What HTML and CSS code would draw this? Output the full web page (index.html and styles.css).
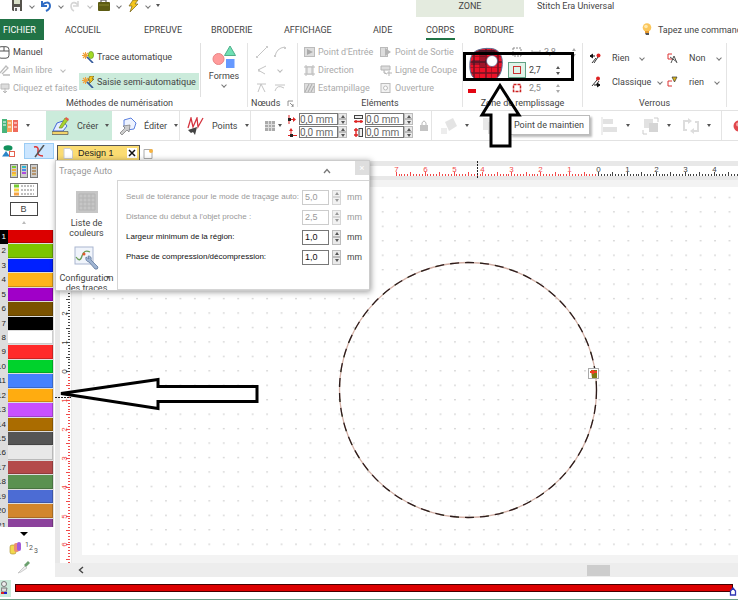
FILE: index.html
```html
<!DOCTYPE html>
<html lang="fr">
<head>
<meta charset="utf-8">
<title>Stitch Era Universal</title>
<link rel="stylesheet" href="styles.css">
</head>
<body>
<header class="titlebar">
  <div class="quick">
    <button class="ib" aria-label="Enregistrer"><svg width="12" height="12" viewBox="0 0 12 12"><path d="M1 0h10v11H2L1 10z" fill="#55534c"/><path d="M3 0h6v4H3z" fill="#d9e0c8"/><path d="M3 7h6v4H3z" fill="#f4f4f4"/><path d="M4 8h2v3H4z" fill="#666"/></svg></button>
    <i class="chev"></i>
    <button class="ib" aria-label="Annuler"><svg width="12" height="12" viewBox="0 0 12 12"><path d="M2 1v5h5M2 6C4 2 10 1 10 6c0 2-2 4-4 5" fill="none" stroke="#2f6cc4" stroke-width="2"/></svg></button>
    <i class="chev"></i>
    <button class="ib" aria-label="Rétablir"><svg width="12" height="12" viewBox="0 0 12 12"><path d="M9 1v5H4M9 6C8 2 2 1 2 6c0 2 1 4 3 5" fill="none" stroke="#d6d6d6" stroke-width="1.6"/></svg></button>
    <i class="chev pale"></i>
    <button class="ib" aria-label="Matériel"><svg width="12" height="12" viewBox="0 0 12 12"><path d="M3 3V0h5v3" fill="none" stroke="#777" stroke-width="1.4"/><rect x="0" y="2" width="12" height="9" rx="1" fill="#5d5c13"/><path d="M1 5h10" stroke="#87862c"/></svg></button>
    <i class="chev"></i>
    <button class="ib" aria-label="Exécuter"><svg width="12" height="12" viewBox="0 0 12 12"><path d="M6 0h5L8 4h3L3 12l2-6H2z" fill="#f4c51d" stroke="#77651d" stroke-width=".7"/></svg></button>
    <i class="chev"></i><i class="tri"></i>
  </div>
  <div class="context">ZONE</div>
  <div class="apptitle">Stitch Era Universal</div>
</header>

<nav class="tabs">
  <button class="tab file">FICHIER</button>
  <button class="tab t-acc">ACCUEIL</button>
  <button class="tab t-epr">EPREUVE</button>
  <button class="tab t-bro">BRODERIE</button>
  <button class="tab t-aff">AFFICHAGE</button>
  <button class="tab t-aid">AIDE</button>
  <button class="tab t-cor"><span>CORPS</span></button>
  <button class="tab t-bor">BORDURE</button>
  <button class="tell"><svg width="10" height="13" viewBox="0 0 10 13"><circle cx="5" cy="4.500" r="4.300" fill="#fbc65b"/><circle cx="4" cy="3.500" r="1.800" fill="#ffe9ae"/><path d="M3 8h4v2H3z" fill="#e79a2e"/><path d="M3 10h4v2H4z" fill="#555"/></svg>Tapez une commande</button>
</nav>

<section class="ribbon">
  <div class="group g-met">
    <div class="body">
      <div class="col three c-man">
        <button class="cmd"><svg width="10" height="13" viewBox="0 0 10 13"><rect x="-2" y=".7" width="11" height="11.500" rx="3" fill="#fff" stroke="#555"/><path d="M-2 5h11M4 1v4" stroke="#555"/></svg>Manuel</button>
        <button class="cmd off"><svg width="10" height="12" viewBox="0 0 10 12"><path d="M0 9l6-7 2 2-6 6M3 11h7" fill="none" stroke="#bbb" stroke-width="1.300"/></svg>Main libre<i class="chev pale"></i></button>
        <button class="cmd off"><svg width="10" height="12" viewBox="0 0 10 12"><path d="M1 2h8v5H1zM5 6v5M3 9l2 2 2-2" fill="#ddd" stroke="#bbb"/></svg>Cliquez et faites</button>
      </div>
      <div class="col two c-tra">
        <button class="cmd"><svg width="12" height="12" viewBox="0 0 12 12"><path d="M3.500 1v7M0 4.500h7M1 2l5 5M6 2L1 7" stroke="#f0a23c" stroke-width="1.100"/><ellipse cx="9" cy="4" rx="2.600" ry="3.600" fill="#a3da25" stroke="#5d8a18" stroke-width=".6"/><path d="M5 6l6 6" stroke="#345a9b" stroke-width="1.700"/></svg>Trace automatique</button>
        <button class="cmd on"><svg width="12" height="12" viewBox="0 0 12 12"><path d="M3.500 1v7M0 4.500h7M1 2l5 5M6 2L1 7" stroke="#f0a23c" stroke-width="1.100"/><path d="M8 0h4l-2 3h2L7 8l1-4H6z" fill="#f6c51f" stroke="#6b5a14" stroke-width=".7"/><path d="M5 6l6 6" stroke="#345a9b" stroke-width="1.700"/></svg>Saisie semi-automatique</button>
      </div>
      <button class="big"><svg width="24" height="24" viewBox="0 0 24 24"><circle cx="6.500" cy="14" r="5.500" fill="#ff9b9b" stroke="#e98585"/><path d="M18 1l5.500 9.500h-11z" fill="#6fe0b4" stroke="#4fae8a"/><rect x="14" y="14" width="8.500" height="9" fill="#6699ff"/></svg>Formes<i class="chev"></i></button>
    </div>
    <div class="glabel">Méthodes de numérisation</div>
  </div>

  <div class="group g-noe">
    <div class="body">
      <div class="nodes">
        <button class="ib" aria-label="Ligne"><svg width="12" height="12"><path d="M1 11L11 1" stroke="#c4c4c4"/><path d="M0 10h2v2H0zM10 0h2v2h-2z" fill="#ccc"/></svg></button>
        <button class="ib" aria-label="Courbe"><svg width="12" height="12"><path d="M1 11Q2 2 11 1" fill="none" stroke="#c4c4c4"/><path d="M0 9h2v2H0zM10 1h2v2h-2z" fill="#ccc"/></svg></button>
        <button class="ib" aria-label="Angle"><svg width="12" height="12"><path d="M10 2L2 6l7 4M3 5v3" fill="none" stroke="#c4c4c4"/></svg></button>
        <i class="chev pale"></i>
        <button class="ib" aria-label="Pointe"><svg width="12" height="12"><path d="M1 2h9M5 2L2 10M5 2l4 8" fill="none" stroke="#c4c4c4"/></svg></button>
        <button class="ib" aria-label="Lisse"><svg width="12" height="12"><path d="M1 9Q3 2 10 6M1 3h10" fill="none" stroke="#c4c4c4"/></svg></button>
      </div>
    </div>
    <div class="glabel">Nœuds<svg width="7" height="7"><path d="M1 6V1h5M3 3l3 3M6 4v3H4" fill="none" stroke="#777" stroke-width=".8"/></svg></div>
  </div>

  <div class="group g-ele">
    <div class="body">
      <div class="col three">
        <button class="cmd off"><svg width="11" height="10"><rect x=".5" y=".5" width="10" height="9" fill="#ddd" stroke="#bbb"/><path d="M3 2l6 3-6 3z" fill="#aaa"/></svg>Point d'Entrée</button>
        <button class="cmd off"><svg width="11" height="11"><path d="M2 0v11M9 0v11M0 2h11M0 9h11" stroke="#bbb"/><rect x="3" y="2" width="5" height="7" fill="#eee" stroke="#bbb"/></svg>Direction</button>
        <button class="cmd off"><svg width="11" height="10"><rect x=".5" y=".5" width="10" height="9" fill="#ddd" stroke="#c4c4c4"/><path d="M1 9l4-8M4 9l4-8M7 9l3-6" stroke="#aaa"/></svg>Estampillage</button>
      </div>
      <div class="col three c-sor">
        <button class="cmd off"><svg width="12" height="10"><rect x=".5" y=".5" width="7" height="9" fill="#ddd" stroke="#bbb"/><path d="M5 1l6 4-6 4z" fill="#b5b5b5"/></svg>Point de Sortie</button>
        <button class="cmd off"><svg width="12" height="11"><path d="M1 1h9v4H1zM4 5v3l3 1" fill="#ddd" stroke="#b5b5b5"/><path d="M9 6v5M7 8h5" stroke="#b5b5b5"/></svg>Ligne de Coupe</button>
        <button class="cmd off"><svg width="12" height="10"><rect x="1" y=".5" width="9" height="9" fill="#f2f2f2" stroke="#bbb"/><circle cx="5.500" cy="5" r="2" fill="#fff" stroke="#bbb"/></svg>Ouverture</button>
      </div>
    </div>
    <div class="glabel">Eléments</div>
  </div>

  <div class="group g-zon">
    <div class="body">
      <button class="fill" aria-label="Motif de remplissage"><svg width="36" height="48" viewBox="0 0 36 48"><defs><pattern id="plaid" x="2" y="1" width="12" height="11" patternUnits="userSpaceOnUse"><rect width="12" height="11" fill="#ec1228"/><path d="M0 3h12M4 0v11" stroke="#2a1420" stroke-width="1.500" opacity=".65"/><path d="M0 8.500h12M9.500 0v11" stroke="#8a0b1b" stroke-width=".6"/></pattern></defs><path d="M10 3c5-2 12-2 16-1 8 3 9 11 8 18-1 8-5 13-10 12-6-2-10 1-13 1C4 33 1 25 2 15 3 8 5 5 10 3z" fill="url(#plaid)" stroke="#5a6f94"/><path d="M12 3h14l2 3H9z" fill="#10192a" opacity=".5"/><path d="M12 5h5v16h-5zM4 13h14v5H3z" fill="#10192a" opacity=".35"/><circle cx="24" cy="14" r="5.500" fill="#fff" stroke="#34517e" stroke-width=".6"/><path d="M0 42h8v4H0z" fill="#e30613"/></svg></button>
      <div class="params">
        <div class="param wide dim"><svg width="10" height="10"><rect x="1" y="1" width="8" height="8" fill="none" stroke="#888" stroke-dasharray="2 1"/></svg><svg class="gauge" width="10" height="6"><path d="M1 3h8M1 1v4M9 1v4" stroke="#aaa"/></svg><label for="p1" class="vh">Densité</label><input id="p1" class="pin" value="3,8"><span class="spin"><button aria-label="Plus"></button><button aria-label="Moins"></button></span></div>
        <div class="param"><button class="hold" aria-label="Point de maintien"><svg width="10" height="10"><rect x="1.500" y="1.500" width="7" height="7" fill="none" stroke="#c33"/></svg></button><label for="p2" class="vh">Point de maintien</label><input id="p2" class="pin" value="2,7"><span class="spin"><button aria-label="Plus"></button><button aria-label="Moins"></button></span></div>
        <div class="param dim"><svg width="10" height="10"><rect x="1.500" y="1.500" width="7" height="7" fill="none" stroke="#c22" stroke-width="1.500" stroke-dasharray="3 1"/></svg><label for="p3" class="vh">Longueur</label><input id="p3" class="pin" value="2,5"><span class="spin"><button aria-label="Plus"></button><button aria-label="Moins"></button></span></div>
      </div>
    </div>
    <div class="glabel">Zone de remplissage</div>
  </div>

  <div class="group g-ver">
    <div class="body locks">
      <button class="cmd"><svg width="11" height="12"><path d="M0 4h5M3 2L0 4l3 2" stroke="#111" fill="#111"/><circle cx="8.500" cy="3.500" r="2" fill="#d22"/><path d="M8 5l-4 6M6 6l-4 5" stroke="#333"/></svg>Rien<i class="chev"></i></button>
      <button class="cmd"><svg width="11" height="12"><path d="M5 2H1v5h4" fill="none" stroke="#d33"/><path d="M4 11l3-7 3 7M3 5l7 5" fill="none" stroke="#555"/></svg>Non<i class="chev"></i></button>
      <button class="cmd"><svg width="11" height="12"><circle cx="8" cy="2.500" r="2" fill="#d22"/><path d="M7 4l-5 6M9 5l-3 4" stroke="#333"/><path d="M4 9h6M7 7l3 2-3 2" stroke="#111" fill="#111"/></svg>Classique<i class="chev near"></i></button>
      <button class="cmd"><svg width="11" height="12"><path d="M5 5H1v5h4" fill="none" stroke="#d33"/><path d="M5 1h5L7.500 6z" fill="#d9b51b" stroke="#333" stroke-width=".7"/></svg>rien<i class="chev"></i></button>
    </div>
    <div class="glabel">Verrous</div>
  </div>
</section>

<section class="toolbar">
  <button class="tb a-pal" aria-label="Palette"><svg width="16" height="14"><rect x="0" y="0" width="5" height="14" fill="#48b57c"/><rect x="5" y="1" width="5" height="12" fill="#f7a35b"/><rect x="11" y="1" width="5" height="12" fill="#ef6a5c"/><path d="M1 3h3M1 6h3M6 4h3M6 8h3M12 4h3M12 8h3" stroke="#fff"/></svg><i class="tri"></i></button>
  <button class="tb a-cre"><svg width="18" height="18"><path d="M1 14L5 6l6-2 4 5-4 5z" fill="#e5edff" stroke="#4468d8"/><path d="M7 11L13 1l3 2-6 8z" fill="#a9d32c" stroke="#65821b" stroke-width=".6"/><path d="M14 0l3 2-1 2-3-2z" fill="#e45b4b"/><path d="M0 14.500h16v3H0z" fill="#f2d36b" stroke="#555" stroke-width=".7"/></svg>Créer<i class="tri"></i></button>
  <button class="tb a-edi"><svg width="18" height="18"><path d="M5 3l7-2 5 5-2 6-7 1-3-3z" fill="#eef3ff" stroke="#5c80df"/><path d="M1 16l5-5-2-2 7-1-1 7-2-2-5 5z" fill="#ccc" stroke="#777" stroke-width=".7"/></svg>Éditer<i class="tri"></i></button>
  <button class="tb a-poi"><svg width="18" height="18"><path d="M1 11L4 1l2 9 4-9 1 9 5-9" fill="none" stroke="#d4343f" stroke-width="1.300"/><path d="M1 13l9-3-2 8-2-3-2 1z" fill="#444"/></svg>Points<i class="tri"></i></button>
  <div class="coords">
    <button class="tb a-anc" aria-label="Point d'ancrage"><svg width="10" height="10"><path d="M0 0h10v10H0z" fill="#aaa"/><path d="M3.500 0v10M6.500 0v10M0 3.500h10M0 6.500h10" stroke="#ddd"/></svg><i class="tri"></i></button>
    <div class="pair">
      <label for="x" aria-label="X"><svg width="9" height="9"><path d="M1 0v9M1 4.500h5" stroke="#d22"/><path d="M5 2l3 2.500L5 7z" fill="#d22"/><path d="M0 3h3v3H0z" fill="#222"/></svg></label><input id="x" value="0,0 mm"><span class="spin box"><button aria-label="Plus"></button><button aria-label="Moins"></button></span>
      <label for="y" aria-label="Y"><svg width="9" height="9"><path d="M3 9V3M0 7.500h9" stroke="#d22"/><path d="M1 3l2-3 2 3z" fill="#d22"/><path d="M2 6h3v3H2z" fill="#222"/></svg></label><input id="y" value="0,0 mm"><span class="spin box"><button aria-label="Plus"></button><button aria-label="Moins"></button></span>
    </div>
    <div class="pair">
      <label for="w" aria-label="Largeur"><svg width="9" height="9"><rect x=".5" y=".5" width="8" height="3" fill="#eee" stroke="#444"/><path d="M0 6.500h9M2 5v3M7 5v3" stroke="#d22" stroke-width="1.400"/></svg></label><input id="w" value="0,0 mm"><span class="spin box"><button aria-label="Plus"></button><button aria-label="Moins"></button></span>
      <label for="h" aria-label="Hauteur"><svg width="9" height="9"><rect x="5" y=".5" width="3.500" height="8" fill="#eee" stroke="#444"/><path d="M2 0v9M0 2h4M0 7h4" stroke="#d22" stroke-width="1.400"/></svg></label><input id="h" value="0,0 mm"><span class="spin box"><button aria-label="Plus"></button><button aria-label="Moins"></button></span>
    </div>
    <button class="ib" aria-label="Verrouiller"><svg width="8" height="12"><path d="M2 5V3q2-4 4 0v2" fill="none" stroke="#bbb"/><rect y="5" width="8" height="6" fill="#c4c4c4"/></svg></button>
  </div>
  <button class="tb g1" aria-label="Pivoter"><svg width="18" height="18"><path d="M5 5l8-4 4 8-8 5z" fill="#e4e4e4"/><path d="M1 11h6v6H1z" fill="#ededed"/></svg><i class="tri"></i></button>
  <button class="tb g2" aria-label="Combiner"><svg width="18" height="18"><rect x="1" y="1" width="11" height="12" fill="#e8e8e8"/><rect x="6" y="5" width="10" height="12" fill="#ddd"/></svg><i class="tri"></i></button>
  <button class="tb g3" aria-label="Aligner"><svg width="18" height="18"><path d="M1 0v18" stroke="#ddd"/><rect x="2" y="2" width="10" height="5" fill="#e2e2e2"/><rect x="2" y="10" width="14" height="5" fill="#e2e2e2"/></svg><i class="tri"></i></button>
  <button class="tb g4" aria-label="Dimensionner"><svg width="18" height="18"><rect x="2" y="2" width="9" height="9" fill="#e2e2e2"/><rect x="7" y="6" width="9" height="9" fill="#d5d5d5"/><path d="M12 1h4v4M1 13v4h4" fill="none" stroke="#ccc"/></svg><i class="tri"></i></button>
  <button class="tb g5" aria-label="Rotation"><svg width="18" height="18"><path d="M7 4H2v9h3M11 14h5V5h-3" fill="none" stroke="#ddd" stroke-width="2"/><path d="M6 1l4 3-4 3zM12 11l-4 3 4 3z" fill="#ddd"/></svg><i class="tri"></i></button>
  <button class="tb g6" aria-label="Enregistrement"><svg width="12" height="12"><circle cx="6" cy="6" r="5.500" fill="#e0474c"/><circle cx="5" cy="4.500" r="2" fill="#f6a4a4"/></svg></button>
</section>

<main class="main">
  <aside class="side">
    <div class="sidetabs">
      <button class="ib" aria-label="Objets"><svg width="14" height="12"><ellipse cx="6" cy="3" rx="4.500" ry="2.800" fill="#12915c"/><path d="M4 6l4 5.500H0z" fill="#2a86c8"/><rect x="7.500" y="6.500" width="5" height="5" fill="#fff" stroke="#e4604e"/></svg></button>
      <button class="ib sel" aria-label="Fils"><svg width="14" height="13"><path d="M2 2q5-1 4 4t5 5" fill="none" stroke="#d33" stroke-width="1.500"/><path d="M12 0L6 8l-3 4" stroke="#555" stroke-width="1.500" fill="none"/></svg></button>
    </div>
    <button class="ib" aria-label="Palettes"><svg width="28" height="14"><g fill="#ccc" stroke="#777"><rect x=".5" y=".5" width="7" height="13"/><rect x="10.500" y=".5" width="7" height="13"/><rect x="20.500" y=".5" width="7" height="13"/></g><path d="M2 3h4" stroke="#77cc33" stroke-width="2"/><path d="M12 6h4" stroke="#4c8ae8" stroke-width="2"/><path d="M2 6h4M2 9h4" stroke="#f5b03c" stroke-width="2"/><path d="M12 3h4" stroke="#2bb5d8" stroke-width="2"/><path d="M12 9h4" stroke="#b04be0" stroke-width="2"/><path d="M22 4h4M22 7h4M22 10h4" stroke="#b5956e" stroke-width="2"/><path d="M2 11h4" stroke="#f0dc4e" stroke-width="2"/></svg></button>
    <button class="ib" aria-label="Liste"><svg width="28" height="14"><rect x=".5" y=".5" width="27" height="13" fill="#fff" stroke="#777"/><path d="M4 3h5" stroke="#77cc33" stroke-width="3"/><path d="M4 7h5" stroke="#f5cf45" stroke-width="3"/><path d="M4 11h5" stroke="#f5a445" stroke-width="3"/><path d="M11 3h13M11 7h13M11 11h13" stroke="#aaa" stroke-width="1.500" stroke-dasharray="2 1"/></svg></button>
    <button class="bcode">B</button>
    <i class="tri up"></i>
    <div class="listwrap"><ol class="threads" id="threads"></ol></div>
    <i class="tri down"></i>
    <button class="ib" aria-label="Séquence"><svg width="30" height="14"><rect x="1" y="4" width="6" height="9" rx="2" fill="#f2d84e" stroke="#a58a28" stroke-width=".6"/><rect x="5" y="2" width="5" height="9" rx="2" fill="#ed8f72"/><rect x="8" y="1" width="4" height="9" rx="2" fill="#a35bd8"/><g font-size="7" fill="#555"><text x="16" y="6">1</text><text x="20" y="9">2</text><text x="25" y="12">3</text></g></svg></button>
    <button class="ib" aria-label="Pipette"><svg width="14" height="14"><path d="M1 13l7-7 2 2-6 4z" fill="#eee" stroke="#bbb" stroke-width=".7"/><path d="M7 5l4-4 2 2-4 4z" fill="#6ba06e"/></svg></button>
  </aside>

  <div class="work">
    <div class="doctabs">
      <div class="doctab"><svg width="10" height="11"><path d="M1 .5h6l2.500 2.500v7.500H1z" fill="#fff" stroke="#ccc"/></svg><span>Design 1</span><button aria-label="Fermer"><svg width="8" height="8"><path d="M1 1l6 6M7 1L1 7" stroke="#111" stroke-width="1.500"/></svg></button></div>
      <button class="ib" aria-label="Nouveau"><svg width="11" height="12"><path d="M1 1.500h8v9H1z" fill="#fff" stroke="#aaa"/><circle cx="8" cy="3" r="2" fill="#f6b341"/></svg></button>
    </div>
    <svg class="hruler" width="100%" height="26">
      <rect width="100%" height="26" fill="#f3f3f3"/><rect width="100%" height="19" fill="#e8e8e8"/><rect y="5" width="100%" height="10" fill="#fff"/>
      <g id="hmarks"></g>
      <path d="M422.500 0v17" stroke="#222" stroke-dasharray="2 1"/>
    </svg>
    <svg class="vruler" width="27" height="100%">
      <rect width="27" height="100%" fill="#f3f3f3"/><rect width="17" height="100%" fill="#e8e8e8"/><rect x="5" width="11" height="100%" fill="#fff"/>
      <g id="vmarks"></g>
      <path d="M0 210.500h16" stroke="#222" stroke-dasharray="2 1"/>
    </svg>
    <svg class="canvas" width="100%" height="100%">
      <defs><pattern id="dots" x="4" y="3" width="14.450" height="14.450" patternUnits="userSpaceOnUse"><rect x="7" y="7" width="1.400" height="1" fill="#b4b4b4"/></pattern></defs>
      <rect width="100%" height="100%" fill="#fff"/><rect width="100%" height="100%" fill="url(#dots)"/>
      <ellipse cx="386" cy="203" rx="128.500" ry="127.500" fill="none" stroke="#d3b0a6" stroke-width="1.300"/>
      <ellipse cx="386" cy="203" rx="128.500" ry="127.500" fill="none" stroke="#7fa371" stroke-width="1" stroke-dasharray="3 12"/>
      <ellipse cx="386" cy="203" rx="128.500" ry="127.500" fill="none" stroke="#2c1c1c" stroke-width="1.300" stroke-dasharray="9 6"/>
      <rect x="506.500" y="181.500" width="10" height="10" fill="#fff" stroke="#aaa"/><path d="M509 183h6v8h-5z" fill="#7c7b13"/><path d="M508 185h7M511 183v4" stroke="#ef4023" stroke-width="2"/>
    </svg>
    <div class="hscroll"><button class="ib" aria-label="Défiler à gauche"><svg width="6" height="8"><path d="M5 1L1.500 4 5 7" fill="none" stroke="#444" stroke-width="1.400"/></svg></button><i class="thumb"></i></div>

    <section class="dialog">
      <div class="dhead"><span>Traçage Auto</span><button class="ib" aria-label="Réduire"><svg width="8" height="6"><path d="M1 5l3-3.500L7 5" fill="none" stroke="#777" stroke-width="1.300"/></svg></button><button class="close" aria-label="Fermer">×</button></div>
      <div class="dbody">
        <div class="dnav">
          <button><svg width="22" height="22"><rect width="22" height="22" fill="#c6c6c6"/><path d="M3 3h16v16H3zM7 3v16M11 3v16M15 3v16M3 7h16M3 11h16M3 15h16" fill="none" stroke="#b4b4b4"/></svg>Liste de<br>couleurs</button>
          <button class="cfg"><svg width="26" height="25"><rect x="1" y="1" width="18" height="17" fill="#f0f4fb" stroke="#aab6d0"/><path d="M2 11q4 6 6-1t8-4" fill="none" stroke="#6a9c58" stroke-width="1.300"/><circle cx="10" cy="8" r="1.500" fill="#e2572c"/><path d="M12 11q-1 4 3 5l6 7q3 1 3-2l-7-7q1-4-3-4l1 3z" fill="#9fb4d2" stroke="#60789c" stroke-width=".8"/></svg>Configuration<br>des traces<i class="tri"></i></button>
        </div>
        <div class="dform">
          <div class="row dis"><label for="d1">Seuil de tolérance pour le mode de traçage auto:</label><input id="d1" value="5,0" disabled><span class="spin box"><button disabled aria-label="Plus"></button><button disabled aria-label="Moins"></button></span><span>mm</span></div>
          <div class="row dis"><label for="d2">Distance du début à l'objet proche :</label><input id="d2" value="2,5" disabled><span class="spin box"><button disabled aria-label="Plus"></button><button disabled aria-label="Moins"></button></span><span>mm</span></div>
          <div class="row"><label for="d3">Largeur minimum de la région:</label><input id="d3" value="1,0"><span class="spin box"><button aria-label="Plus"></button><button aria-label="Moins"></button></span><span>mm</span></div>
          <div class="row"><label for="d4">Phase de compression/décompression:</label><input id="d4" value="1,0"><span class="spin box"><button aria-label="Plus"></button><button aria-label="Moins"></button></span><span>mm</span></div>
        </div>
      </div>
    </section>
  </div>
</main>

<footer class="stitch">
  <button class="ib" aria-label="Simulateur"><svg width="10" height="16"><circle cx="3" cy="4" r="2.500" fill="#eee" stroke="#777"/><path d="M0 8h6l-1 4H1z" fill="#ddd" stroke="#777"/><path d="M0 13h3" stroke="#d22" stroke-width="2"/><path d="M3 13h3" stroke="#22c" stroke-width="2"/></svg></button>
  <div class="bar"></div>
  <svg class="home" width="8" height="9"><path d="M1.500 8V4L4 1l2.500 3v4z" fill="#fff" stroke="#2f35b5" stroke-width="1.300"/></svg>
</footer>

<div class="tooltip" role="tooltip">Point de maintien</div>
<svg class="notes" width="600" height="420" fill="none" stroke="#000" stroke-width="3">
  <rect x="464.500" y="53.500" width="108" height="26"/>
  <path d="M491 115h19v31h-19z" fill="#fff" stroke="none"/>
  <path d="M500 85.500l19 29.500h-9v31h-19v-31h-9z"/>
  <path d="M61 393.500L158 379.500v7h99v15H158v7z" fill="#fff"/>
</svg>
<script src="script.js"></script>
</body>
</html>
```
FILE: styles.css
```css
* { box-sizing: border-box; }
body {
  margin: 0;
  min-height: 100vh;
  display: flex;
  flex-direction: column;
  position: relative;
  overflow: hidden;
  background: #fff;
  color: #444;
  font: 9px/12px Roboto, "Open Sans", sans-serif;
  white-space: nowrap;
}
button, input { font: inherit; color: inherit; margin: 0; padding: 0; border: 0; background: none; }
button { display: flex; align-items: center; white-space: nowrap; }
input { min-width: 0; }
svg { display: block; flex: none; }
i { flex: none; display: block; }
.ib { flex: none; justify-content: center; }
.vh { position: absolute; width: 1px; height: 1px; overflow: hidden; clip-path: inset(50%); }
.chev { width: 4px; height: 4px; border: solid #777; border-width: 0 1px 1px 0; transform: rotate(45deg); }
.chev.pale { border-color: #bbb; }
.tri { width: 0; height: 0; border: 2px solid transparent; border-top: 3px solid #555; border-bottom: 0; }
.tri.up { border-top: 0; border-bottom: 3px solid #bbb; }
.tri.down { border-width: 4px; border-top-color: #000; border-bottom: 0; }

.titlebar { display: flex; height: 17px; flex: none; align-items: flex-start; }
.quick { flex: none; width: 416px; padding-left: 11px; display: flex; align-items: center; gap: 7px; height: 11px; }
.quick .chev { margin-right: -1px; }
.context { flex: none; width: 108px; height: 17px; background: #e4ebdf; text-align: center; }
.apptitle { padding-left: 13px; }

.tabs { display: flex; height: 25px; flex: none; align-items: center; overflow: hidden; }
.tab { height: 21px; flex: none; }
.file { background: #217346; color: #fff; width: 44px; padding-left: 3px; }
.t-acc { width: 79px; margin-left: 21px; }
.t-epr { width: 67px; }
.t-bro { width: 73px; }
.t-aff { width: 89px; }
.t-aid { width: 53px; }
.t-cor { width: 48px; }
.t-cor span { border-bottom: 2px solid #217346; padding-top: 4px; line-height: 15px; }
.t-bor { width: 168px; }
.tell { gap: 6px; }

.ribbon { display: flex; flex: none; height: 69px; border-bottom: 1px solid #e2e2e2; }
.group { display: flex; flex: none; flex-direction: column; border-right: 1px solid #e4e4e4; margin: 1px 0 3px; }
.body { display: flex; height: 54px; }
.glabel { text-align: center; line-height: 12px; }
.col { display: flex; flex-direction: column; align-items: flex-start; flex: none; }
.three .cmd { height: 18px; }
.two { padding-top: 5px; gap: 8px; }
.two .cmd { height: 17px; padding: 0 3px; }
.cmd { gap: 3px; }
.cmd .chev { margin-left: 6px; }
.off { color: #aaa; }
.on { background: #cbebdb; }
.g-met { width: 248px; }
.c-man { width: 79px; }
.c-tra { width: 122px; border-right: 1px solid #e0e0e0; }
.big { flex-direction: column; width: 47px; gap: 1px; padding-top: 2px; }
.g-met .glabel { padding-right: 8px; }
.g-noe { width: 50px; }
.nodes { display: grid; grid-template-columns: 18px 18px; grid-auto-rows: 18px; place-items: center; padding-left: 5px; }
.g-noe .glabel { display: flex; align-items: center; gap: 7px; padding-left: 3px; }
.g-ele { width: 165px; }
.g-ele .body { padding-left: 6px; }
.g-ele .col { width: 76px; }
.g-zon { width: 120px; }
.g-zon .body { padding-left: 5px; }
.fill { align-items: flex-start; padding-top: 4px; flex: none; }
.params { display: flex; flex-direction: column; padding-left: 4px; }
.param { display: flex; align-items: center; height: 18px; gap: 3px; width: 54px; }
.param.wide { width: 70px; }
.gauge { margin-left: 6px; }
.param > svg:first-child { margin: 0 4px; }
.hold { width: 18px; height: 16px; flex: none; justify-content: center; background: #dff3e8; border: 1px solid #62a184; }
.param.wide > svg:first-child { margin-right: 0; }
.pin { flex: 1; }
.dim { color: #888; }
.spin { display: flex; flex-direction: column; flex: none; justify-content: space-between; width: 9px; height: 12px; }
.spin button { width: 100%; flex: 1; justify-content: center; }
.spin button::before { content: ""; border: 2px solid transparent; border-bottom: 3px solid #555; border-top: 0; }
.spin button + button::before { border-bottom: 0; border-top: 3px solid #555; }
.dim .spin button { opacity: .5; }
.box button { background: #e9e9e9; border: 1px solid #bbb; }
.g-ver { width: 144px; }
.locks { display: grid; grid-template-columns: 77px 1fr; grid-auto-rows: 24px; padding: 3px 0 3px 7px; }
.locks .cmd { gap: 11px; }
.locks .chev { margin-left: 0; }
.locks .near { margin-left: -4px; }

.toolbar { display: flex; flex: none; height: 30px; border-bottom: 1px solid #e2e2e2; overflow: hidden; }
.tb { flex: none; gap: 7px; }
.a-pal { width: 46px; padding-left: 2px; gap: 8px; }
.a-cre { width: 66px; padding-left: 6px; background: #cbebdb; }
.a-edi { width: 68px; padding-left: 7px; border-right: 1px solid #e4e4e4; }
.a-poi { width: 71px; padding-left: 7px; border-right: 1px solid #e4e4e4; }
.a-anc { gap: 3px; }
.coords { display: flex; flex: none; align-items: center; width: 181px; padding-left: 14px; gap: 6px; border-right: 1px solid #e4e4e4; }
.pair { display: grid; flex: none; grid-template-columns: 11px 39px 10px; align-items: center; row-gap: 1px; }
.pair input { height: 12px; border: 1px solid #777; width: 39px; font: 10px/10px Roboto, sans-serif; color: #666; }
.g1 { width: 50px; padding-left: 8px; }
.g2 { width: 119px; }
.g3 { width: 41px; }
.g4 { width: 40px; }
.g5 { width: 40px; border-right: 1px solid #e4e4e4; }
.g6 { padding-left: 11px; }

.main { display: flex; flex: 1; min-height: 0; }
.side { width: 55px; display: flex; flex-direction: column; align-items: center; flex: none; gap: 5px; padding-right: 8px; }
.sidetabs { display: flex; align-self: stretch; margin: 2px -8px 0 0; padding-left: 2px; }
.sidetabs .ib { width: 22px; height: 16px; justify-content: flex-start; }
.sidetabs .sel { width: 30px; background: #cce6ff; border: 1px solid #9accf5; justify-content: center; }
.bcode { width: 28px; height: 14px; border: 1px solid #444; justify-content: center; font: 9px "Liberation Sans", sans-serif; }
.listwrap { align-self: stretch; height: 297px; overflow: hidden; margin: 1px -7px 0 0; }
.threads { list-style: none; margin: 0; padding: 0; height: 303px; display: grid; grid-template-rows: repeat(21, 1fr); font: 8px/13px "Liberation Sans", sans-serif; }
.threads li { display: grid; grid-template-columns: 8px 1fr; padding-bottom: 1px; background: #ddd; }
.threads span { direction: rtl; overflow: hidden; width: 6px; color: #222; }
.threads b { margin-right: 1px; border: 1px solid #0003; border-width: 0 1px 1px 0; }
.threads li:first-child { background: linear-gradient(90deg, #000 8px, #ddd 8px); }
.threads li:first-child span { color: #fff; }

.work { flex: 1; min-width: 0; position: relative; display: grid; grid-template: 20px 26px minmax(0, 1fr) 14px / 27px minmax(0, 1fr); background: #f3f3f3; }
.doctabs { grid-column: 1 / -1; display: flex; align-items: flex-end; gap: 3px; padding: 0 0 1px 2px; background: #fff; }
.doctab { width: 83px; height: 15px; display: flex; align-items: center; gap: 5px; padding: 0 2px 0 5px; background: #fbdc72; border: 1px solid #555; border-bottom: 0; color: #222; font: 9px "Liberation Sans", sans-serif; }
.doctab span { flex: 1; }
.doctab button { width: 10px; height: 10px; background: #fff; justify-content: center; }
.hruler { grid-column: 1 / -1; }
.canvas { height: calc(100% - 8px); }
.hscroll { grid-column: 1 / -1; background: #ededed; display: flex; align-items: center; padding: 0 128px 0 23px; justify-content: space-between; }
.thumb { width: 23px; height: 11px; background: #cdcdcd; }
.hruler text, .vruler text { font: 8px "Liberation Sans", sans-serif; fill: currentColor; text-anchor: middle; }

.dialog { position: absolute; left: 0; top: 19px; width: 315px; height: 131px; overflow: hidden; background: #fff; border: 1px solid #ccc; box-shadow: 1px 1px 6px #0006; display: flex; flex-direction: column; }
.dhead { display: flex; height: 19px; flex: none; align-items: center; color: #999; padding-left: 3px; }
.dhead span { flex: 1; }
.close { width: 14px; height: 14px; background: #dedede; color: #fff; justify-content: center; align-self: flex-start; margin-left: 24px; }
.dbody { display: flex; flex: 1; min-height: 0; }
.dnav { width: 61px; flex: none; display: flex; flex-direction: column; gap: 8px; padding-top: 11px; line-height: 10px; }
.dnav button { display: block; width: 61px; text-align: center; flex: none; }
.dnav svg { margin: 0 auto 5px; }
.dnav .cfg svg { margin-bottom: 2px; }
.cfg { position: relative; }
.cfg .tri { position: absolute; right: 7px; top: 30px; }
.dform { flex: 1; border: 1px solid #d5d5d5; padding: 6px 8px; display: flex; flex-direction: column; color: #111; font: 8px/12px "Liberation Sans", sans-serif; }
.row { display: flex; align-items: center; height: 20px; gap: 3px; }
.row label { width: 173px; }
.row input { width: 27px; height: 15px; border: 1px solid #777; padding-left: 2px; font-size: 9px; }
.row .spin { height: 15px; }
.row > span:last-child { margin-left: 3px; color: #444; font-size: 9px; }
.dis, .row.dis > span:last-child { color: #999; }
.dis input { border-color: #ccc; }
.dis .spin { opacity: .6; }

.stitch { flex: none; height: 23px; display: flex; align-items: center; border-bottom: 1px solid #6d9c86; position: relative; }
.stitch .ib { width: 11px; height: 17px; background: #cbebdb; }
.bar { flex: 1; height: 8px; margin: 0 5px 0 4px; background: #dc0000; border: 1px solid #400; }
.home { position: absolute; right: 1px; bottom: 3px; }

.tooltip { position: absolute; left: 510px; top: 115px; padding: 3px 5px 3px 3px; background: #fff; border: 1px solid #bbb; box-shadow: 2px 2px 2px #0004; }
.notes { position: absolute; left: 0; top: 0; pointer-events: none; }
```
FILE: script.js
```js
const NS = 'http://www.w3.org/2000/svg';
const UNIT = 28.9;
const RED = '#f04a4a', DARK = '#444';

function add(parent, name, attrs, text) {
  const el = document.createElementNS(NS, name);
  for (const k in attrs) el.setAttribute(k, attrs[k]);
  if (text !== undefined) el.textContent = text;
  parent.append(el);
}

// Ten ticks per unit, a longer one at each half and whole unit.
function ruler(group, origin, from, to, vertical) {
  for (let t = from * 10; t <= to * 10; t++) {
    const p = Math.round(origin + t * UNIT / 10) + 0.5;
    const len = t % 5 === 0 ? 4 : 2;
    const neg = vertical ? t > 0 : t < 0;
    const color = neg ? RED : DARK;
    add(group, 'path', { d: vertical ? `M${15 - len} ${p}h${len}` : `M${p} ${15 - len}v${len}`, stroke: color });
    if (t % 10 === 0) {
      const pos = vertical ? { transform: `translate(12 ${p}) rotate(-90)` } : { x: p, y: 11 };
      add(group, 'text', { ...pos, color }, Math.abs(t / 10));
    }
  }
}
ruler(document.getElementById('hmarks'), 543, -7, 12, false);
ruler(document.getElementById('vmarks'), 184, -3, 6.6, true);

const colors = ['#dc0000', '#7cc400', '#0020ff', '#ffb41c', '#a000c8', '#7a5200', '#000000',
  '#ffffff', '#ff2a2a', '#00d22c', '#4682ff', '#ffac10', '#c850ff', '#aa6c00', '#555555',
  '#e8e8e8', '#b44a4a', '#5a9150', '#4c6cd4', '#d2862c', '#8c429c'];
document.getElementById('threads').innerHTML = colors
  .map((c, i) => `<li><span>${i + 1}</span><b style="background:${c}"></b></li>`).join('');
```
